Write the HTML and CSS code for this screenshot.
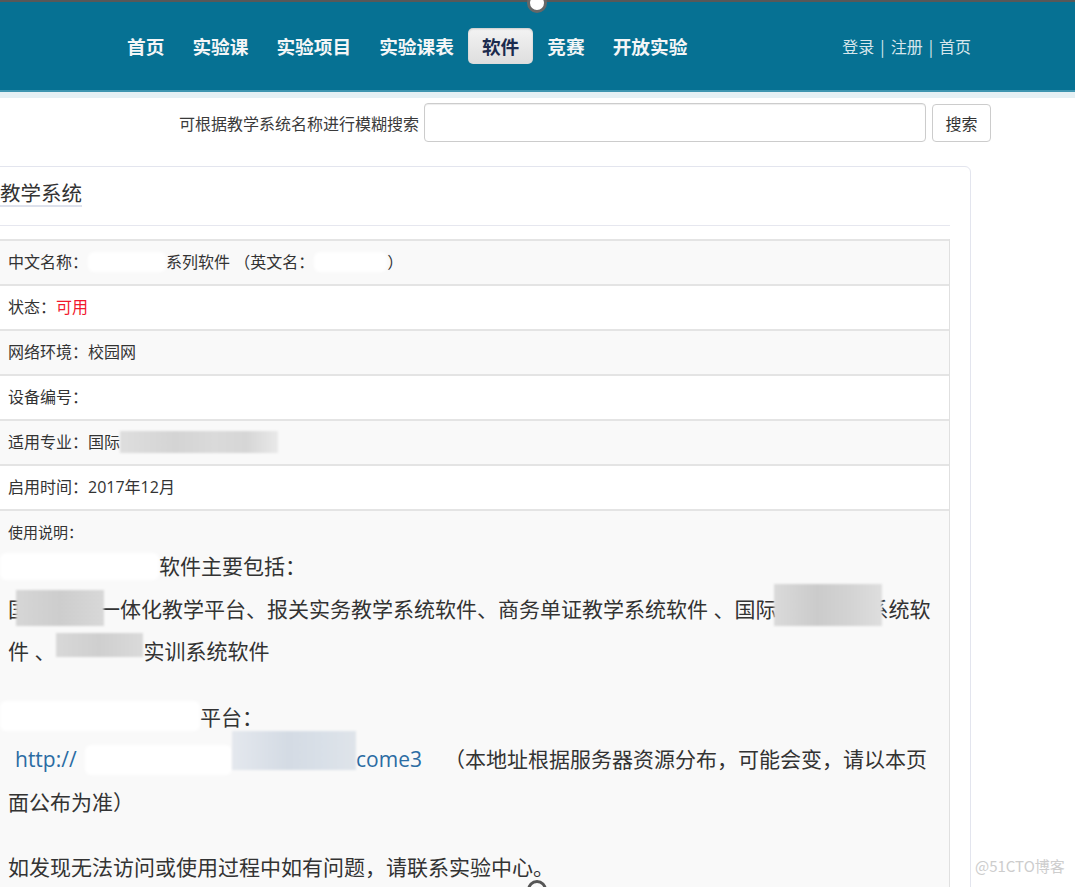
FILE: index.html
```html
<!DOCTYPE html>
<html lang="zh-CN">
<head>
<meta charset="utf-8">
<title>软件 - 教学系统</title>
<link rel="stylesheet" href="styles.css">
</head>
<body>
<div class="topline"></div>
<header class="nav">
  <ul class="menu">
    <li><a href="#">首页</a></li>
    <li><a href="#">实验课</a></li>
    <li><a href="#">实验项目</a></li>
    <li><a href="#">实验课表</a></li>
    <li class="active"><a href="#">软件</a></li>
    <li><a href="#">竞赛</a></li>
    <li><a href="#">开放实验</a></li>
  </ul>
  <div class="userlinks"><a href="#">登录</a><span class="sep">|</span><a href="#">注册</a><span class="sep">|</span><a href="#">首页</a></div>
</header>
<div class="strip"></div>
<form class="search">
  <label class="search-label">可根据教学系统名称进行模糊搜索</label>
  <input class="search-input" type="text">
  <button class="search-btn" type="button">搜索</button>
</form>
<section class="card">
  <div class="card-head"><h2 class="card-title"><span>教学系统</span></h2></div>
  <div class="rows">
    <div class="row">中文名称：<span class="wipe w-cn"></span>系列软件 （英文名：<span class="wipe w-en"></span>）</div>
    <div class="row">状态：<span class="ok">可用</span></div>
    <div class="row">网络环境：校园网</div>
    <div class="row">设备编号：</div>
    <div class="row">适用专业：国际<span class="blur b-major"></span></div>
    <div class="row">启用时间：2017年12月</div>
    <div class="row usage">
      <div class="usage-label">使用说明：</div>
      <div class="para">
        <div class="group">
          <div class="l"><span class="wipe w-a"></span>软件主要包括：</div>
          <div class="l">国<span class="blur b-b1"></span>一体化教学平台、报关实务教学系统软件、商务单证教学系统软件 、国际<span class="blur b-b2"></span>系统软</div>
          <div class="l">件 、<span class="blur b-c"></span>实训系统软件</div>
        </div>
        <div class="group">
          <div class="l"><span class="wipe w-d"></span>平台：</div>
          <div class="l"><a class="link" href="#"><span class="proto">http://</span><span class="wipe w-e"></span><span class="blur b-e"></span>come3</a><span class="note">（本地址根据服务器资源分布，可能会变，请以本页</span></div>
          <div class="l">面公布为准）</div>
        </div>
        <div class="group">
          <div class="l">如发现无法访问或使用过程中如有问题，请联系实验中心。</div>
        </div>
      </div>
    </div>
  </div>
</section>
<div class="watermark">@51CTO博客</div>
<div class="cap cap-top"></div>
<div class="cap cap-bottom"></div>
</body>
</html>
```

FILE: styles.css
```css
body {
  margin: 0;
  font-family: "Open Sans", "Noto Sans CJK SC", sans-serif;
  color: #333;
  background: #fff;
  position: relative;
}

.topline {
  height: 2px;
  background: #585858;
}

.nav {
  display: flex;
  align-items: center;
  justify-content: space-between;
  height: 88px;
  padding: 0 104px 0 113px;
  background: #067193;
  border-bottom: 2px solid #3e95b0;
}

.menu {
  display: flex;
  list-style: none;
  margin: 0;
  padding: 0;
  font-family: "Noto Sans CJK SC", sans-serif;
  font-weight: 700;
  font-size: 18.7px;
}

.menu a {
  display: block;
  padding: 6px 14px;
  line-height: 24px;
  color: #f4f6f7;
  text-decoration: none;
  border-radius: 5px;
}

.menu .active a {
  background: linear-gradient(#f3f3f3, #dedede);
  color: #1b2b4d;
  box-shadow: inset 0 1px 2px rgba(0, 0, 0, 0.18);
}

.userlinks {
  font-family: "Noto Sans CJK SC", sans-serif;
  font-size: 16px;
  line-height: 22px;
  color: #d6e6ec;
}

.userlinks a {
  color: #d6e6ec;
  text-decoration: none;
}

.sep {
  margin: 0 6px;
}

.strip {
  height: 6px;
  background: #e5f0f4;
}

.search {
  display: flex;
  align-items: center;
  margin: 0;
  padding: 5px 0 8px 179px;
}

.search-label {
  font-family: "Noto Sans CJK SC", sans-serif;
  font-size: 16px;
  line-height: 22px;
  color: #3a3a3a;
}

.search-input {
  box-sizing: border-box;
  width: 502px;
  height: 39px;
  margin: 0 0 0 5px;
  border: 1px solid #ccc;
  border-radius: 4px;
  box-shadow: inset 0 1px 1px rgba(0, 0, 0, 0.075);
  background: #fff;
}

.search-btn {
  box-sizing: border-box;
  width: 59px;
  height: 38px;
  margin: 1px 0 0 6px;
  border: 1px solid #ccc;
  border-radius: 4px;
  background: #fff;
  font-family: "Noto Sans CJK SC", sans-serif;
  font-size: 16px;
  color: #333;
  padding: 0;
}

.card {
  width: 950px;
  margin: 16px 0 0 -21px;
  padding: 0 20px 30px;
  border: 1px solid #e3e5ee;
  border-radius: 6px;
  background: #fff;
}

.card-head {
  padding: 12px 0 18px;
  border-bottom: 1px solid #e6e7ef;
}

.card-title {
  margin: 0;
  font-weight: 400;
  font-size: 20.5px;
  line-height: 26px;
}

.card-title span {
  display: inline-block;
  border-bottom: 2px solid #dde1ec;
  font-family: "Noto Sans CJK SC", sans-serif;
  color: #333;
}

.rows {
  margin-top: 13px;
  border-right: 1px solid #e0e0e0;
}

.row {
  padding: 10px 8px 11px 8px;
  border-top: 2px solid #e4e4e4;
  font-size: 16px;
  line-height: 22px;
  white-space: nowrap;
}

.row:nth-child(odd) {
  background: #f9f9f9;
}

.ok {
  color: #f2182c;
}

.usage-label {
  font-size: 15px;
  line-height: 22px;
}

.para {
  margin-top: 2px;
  font-size: 21px;
  line-height: 42.5px;
}

.group + .group {
  margin-top: 23px;
}

.l {
  white-space: nowrap;
}

.link {
  margin-left: 7px;
  color: #2b6ca3;
  text-decoration: none;
}

.proto {
  display: inline-block;
  width: 70px;
}

.note {
  margin-left: 22px;
}

.wipe {
  display: inline-block;
  vertical-align: top;
  background: #fff;
  border-radius: 6px;
  filter: blur(1.5px);
}

.blur {
  display: inline-block;
  position: relative;
  z-index: 1;
  vertical-align: top;
  filter: blur(1.2px);
}

.w-cn { width: 78px; height: 20px; margin-top: 1px; }
.w-en { width: 73px; height: 20px; margin-top: 1px; }

.b-major {
  width: 158px;
  height: 22px;
  background: linear-gradient(90deg, #dedede, #d4d4d4 35%, #dadada 60%, #d6d6d6 80%, #e9e9e9);
}

.w-a { width: 159px; height: 27px; margin: 8px 0 0 -8px; }
.w-d { width: 200px; height: 30px; margin: 5px 0 0 -8px; }
.w-e { width: 147px; height: 30px; margin-top: 7px; }

.b-b1 {
  width: 88px;
  height: 36px;
  margin: 2px -5px 0 -13px;
  background: linear-gradient(90deg, #d6d6d6, #cdcdcd 50%, #d8d8d8);
}

.b-b2 {
  width: 108px;
  height: 42px;
  margin: -3.5px -15px 0 -2px;
  background: linear-gradient(90deg, #dadada, #cbcbcb 40%, #d3d3d3 70%, #dedede);
}

.b-c {
  width: 87px;
  height: 24px;
  margin: 3px 0 0 1px;
  background: linear-gradient(90deg, #d8d8d8, #cfcfcf 50%, #dadada);
}

.b-e {
  width: 124px;
  height: 39px;
  margin-top: -7px;
  background: linear-gradient(90deg, #e4e8ee, #d4dbe4 45%, #d9e0e8 75%, #dfe4ea);
}

.watermark {
  position: absolute;
  left: 975px;
  top: 856px;
  font-family: "Noto Sans CJK SC", sans-serif;
  font-size: 15px;
  line-height: 20px;
  color: #cdcdcd;
}

.cap {
  position: absolute;
  left: 527px;
  width: 14px;
  height: 14px;
  border-radius: 50%;
}

.cap-top {
  top: -7px;
  background: #fff;
  border: 3px solid #676767;
}

.cap-bottom {
  top: 880px;
  border: 3px solid #555;
}
```
